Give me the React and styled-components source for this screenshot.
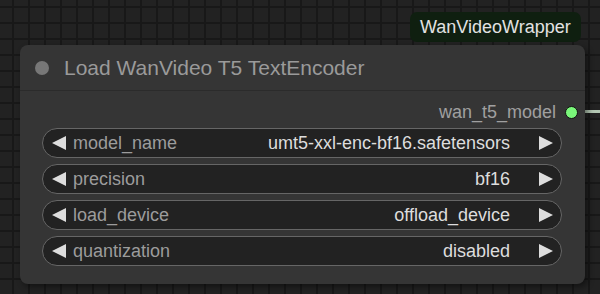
import React from "react";
import styled, { createGlobalStyle } from "styled-components";

const GlobalStyle = createGlobalStyle`
	html, body {
		margin: 0;
		padding: 0;
		background: #202020;
	}
	* {
		box-sizing: border-box;
	}
`;

const Canvas = styled.div`
	position: relative;
	width: 600px;
	height: 294px;
	overflow: hidden;
	font-family: "Liberation Sans", Arial, sans-serif;
	background-color: #222222;
	background-image:
		linear-gradient(to right, #181818 2px, transparent 2px),
		linear-gradient(to bottom, #181818 2px, transparent 2px);
	background-size: 16px 16px;
	background-position: 12px 6px;
`;

const GroupBadge = styled.div`
	position: absolute;
	left: 410px;
	top: 12px;
	height: 30px;
	padding: 0 10px;
	display: flex;
	align-items: center;
	background: #0f1f10;
	border-radius: 7px;
	color: #e2e2e2;
	font-size: 18px;
`;

const Link = styled.div`
	position: absolute;
	left: 585px;
	top: 110px;
	width: 20px;
	height: 3px;
	background: #b3c7b3;
`;

const Node = styled.div`
	position: absolute;
	left: 20px;
	top: 45px;
	width: 565px;
	height: 239px;
	background: #353535;
	border-radius: 8px;
	box-shadow: 3px 3px 6px rgba(0, 0, 0, 0.45);
	display: flex;
	flex-direction: column;
`;

const TitleBar = styled.div`
	height: 46px;
	display: flex;
	align-items: center;
	gap: 15px;
	padding-left: 15px;
	border-bottom: 1px solid #2b2b2b;
`;

const TitleDot = styled.span`
	width: 14px;
	height: 14px;
	border-radius: 50%;
	background: #777777;
`;

const TitleText = styled.span`
	color: #9a9a9a;
	font-size: 21px;
`;

const Body = styled.div`
	display: flex;
	flex-direction: column;
	gap: 6px;
	padding: 9px 23px 0 22px;
`;

const OutputRow = styled.div`
	height: 24px;
	display: flex;
	justify-content: flex-end;
	align-items: center;
	gap: 9px;
	margin-right: -16px;
	margin-bottom: -2px;
	color: #a0a0a0;
	font-size: 18px;
`;

const OutputDot = styled.span`
	width: 13px;
	height: 13px;
	border-radius: 50%;
	background: #7af77a;
	border: 1px solid #111;
`;

const Combo = styled.div`
	height: 30px;
	display: flex;
	align-items: center;
	padding: 0 8px 0 9px;
	background: #222222;
	border: 1px solid #666666;
	border-radius: 15px;
	font-size: 18px;
`;

const Arrow = styled.svg`
	width: 14px;
	height: 14px;
	flex: none;
`;

const Label = styled.span`
	margin-left: 7px;
	color: #9c9c9c;
`;

const Value = styled.span`
	margin-left: auto;
	margin-right: 29px;
	color: #dddddd;
`;

const LeftArrow = () => (
	<Arrow viewBox="0 0 14 14">
		<polygon points="0,7 14,0 14,14" fill="#dddddd" />
	</Arrow>
);

const RightArrow = () => (
	<Arrow viewBox="0 0 14 14">
		<polygon points="14,7 0,0 0,14" fill="#dddddd" />
	</Arrow>
);

const widgets = [
	{ name: "model_name", value: "umt5-xxl-enc-bf16.safetensors" },
	{ name: "precision", value: "bf16" },
	{ name: "load_device", value: "offload_device" },
	{ name: "quantization", value: "disabled" },
];

const App = () => {
	return (
		<>
			<GlobalStyle />
			<Canvas>
				<GroupBadge>WanVideoWrapper</GroupBadge>
				<Link />
				<Node>
					<TitleBar>
						<TitleDot />
						<TitleText>Load WanVideo T5 TextEncoder</TitleText>
					</TitleBar>
					<Body>
						<OutputRow>
							wan_t5_model
							<OutputDot />
						</OutputRow>
						{widgets.map((w) => (
							<Combo key={w.name}>
								<LeftArrow />
								<Label>{w.name}</Label>
								<Value>{w.value}</Value>
								<RightArrow />
							</Combo>
						))}
					</Body>
				</Node>
			</Canvas>
		</>
	);
};

export default App;
